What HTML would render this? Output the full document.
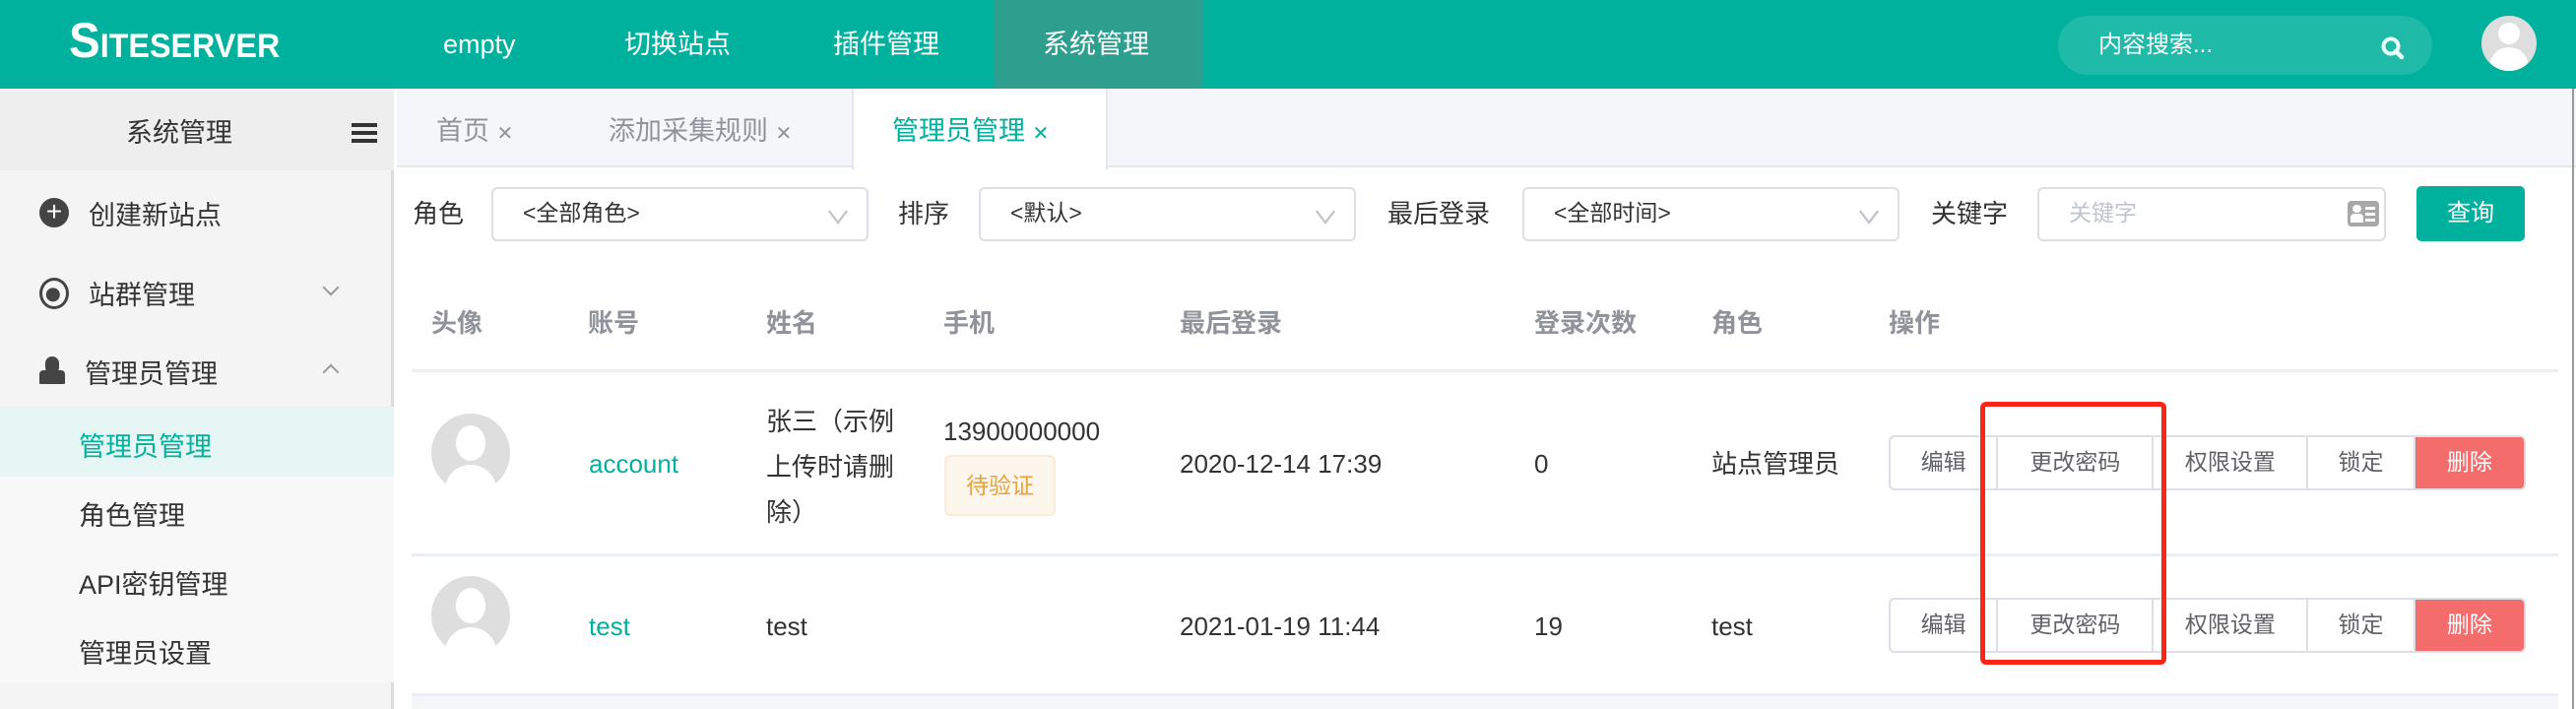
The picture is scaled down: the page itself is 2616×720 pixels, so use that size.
<!DOCTYPE html>
<html><head><meta charset="utf-8">
<style>
*{margin:0;padding:0;box-sizing:border-box}
body{width:2616px;height:720px;overflow:hidden;background:#fff;font-family:"Liberation Sans","Noto Sans CJK SC",sans-serif;color:#606266;position:relative;line-height:1.3}
.a{position:absolute;white-space:nowrap}
.hdr{left:0;top:0;width:2616px;height:90px;background:#00b19d}
.nav{color:#fff;font-size:27px;top:26px;line-height:38px}
.side{left:0;top:90px;width:400px;height:630px;background:#f4f4f4;border-right:3px solid #dcdcdc}
.sideh{left:0;top:90px;width:400px;height:83px;background:#eeeeee}
.mi{font-size:27px;color:#333}
.sub{font-size:27px;color:#333;left:80px}
.tabs{left:403px;top:90px;width:2213px;height:80px;background:#f5f6fa;border-bottom:2px solid #e4e7ed}
.tab{font-size:27px;color:#909399;top:116px}
.lbl{font-size:26px;color:#333;top:201px}
.sel{top:190px;height:55px;border:2px solid #dcdfe6;border-radius:6px;background:#fff;font-size:23px;color:#333;padding:0 30px;line-height:48px}
.chev{position:absolute;right:22px;top:16px;width:14px;height:14px;border-right:2px solid #c0c4cc;border-bottom:2px solid #c0c4cc;transform:scaleY(1.3) rotate(45deg)}
.th{font-size:26px;color:#909399;font-weight:bold;top:312px}
.td{font-size:26px;color:#333}
.line{height:3px;background:#ebeef5;left:418px;width:2180px}
.btns{left:1918px;width:647px;height:56px;border:2px solid #dcdfe6;border-radius:6px;background:#fff;overflow:hidden;display:flex}
.btns div{height:100%;font-size:23px;color:#606266;display:flex;align-items:center;justify-content:center;border-right:2px solid #dcdfe6}
.av{width:80px;height:80px;border-radius:50%;background:#dedede;overflow:hidden}
</style></head><body>
<div class="a hdr"></div>
<div class="a" style="left:70px;top:16px;color:#fff;font-weight:bold;font-size:34px;line-height:50px;transform:scaleX(0.95);transform-origin:left"><span style="font-size:50px">S</span>ITESERVER</div>
<div class="a" style="left:1010px;top:0;width:211px;height:90px;background:#2e9f8f"></div>
<div class="a nav" style="left:450px">empty</div>
<div class="a nav" style="left:634px">切换站点</div>
<div class="a nav" style="left:846px">插件管理</div>
<div class="a nav" style="left:1059px">系统管理</div>
<div class="a" style="left:2090px;top:16px;width:380px;height:60px;border-radius:30px;background:rgba(255,255,255,0.12)"></div>
<div class="a" style="left:2131px;top:30px;color:#fff;font-size:24px">内容搜索...</div>
<svg class="a" style="left:2416px;top:35px" width="28" height="28" viewBox="0 0 28 28"><circle cx="12" cy="12" r="7.5" fill="none" stroke="#e8fffb" stroke-width="4"/><path d="M17 17 L23 23" stroke="#e8fffb" stroke-width="4.5" stroke-linecap="round"/></svg>
<div class="a av" style="left:2520px;top:16px;width:56px;height:56px"><div class="a" style="left:17px;top:7px;width:22px;height:22px;border-radius:50%;background:#fff"></div><div class="a" style="left:9px;top:32px;width:38px;height:34px;border-radius:50%;background:#fff"></div></div>

<div class="a side"></div>
<div class="a sideh"></div>
<div class="a" style="left:128px;top:118px;font-size:27px;color:#333">系统管理</div>
<div class="a" style="left:357px;top:125px;width:26px;height:4px;background:#333;box-shadow:0 8px 0 #333,0 16px 0 #333"></div>
<div class="a" style="left:40px;top:201px;width:30px;height:30px;border-radius:50%;background:#444;color:#fff;font-size:28px;line-height:28px;text-align:center">+</div>
<div class="a mi" style="left:90px;top:202px">创建新站点</div>
<div class="a" style="left:40px;top:282px;width:30px;height:32px;border-radius:50%;border:3px solid #444;background:radial-gradient(circle at 45% 55%,#444 35%,transparent 37%)"></div>
<div class="a mi" style="left:90px;top:283px">站群管理</div>
<div class="a" style="left:330px;top:286px;width:12px;height:12px;border-right:2px solid #999;border-bottom:2px solid #999;transform:rotate(45deg)"></div>
<div class="a" style="left:46px;top:362px;width:14px;height:18px;border-radius:7px;background:#444"></div>
<div class="a" style="left:40px;top:376px;width:26px;height:14px;border-radius:4px 4px 1px 1px;background:#444"></div>
<div class="a mi" style="left:86px;top:363px">管理员管理</div>
<div class="a" style="left:330px;top:372px;width:12px;height:12px;border-left:2px solid #999;border-top:2px solid #999;transform:rotate(45deg)"></div>
<div class="a" style="left:0;top:413px;width:400px;height:280px;background:#f8f8f8"></div>
<div class="a" style="left:0;top:413px;width:400px;height:71px;background:#e6f6f4"></div>
<div class="a sub" style="top:437px;color:#00b19d">管理员管理</div>
<div class="a sub" style="top:507px">角色管理</div>
<div class="a sub" style="top:577px">API密钥管理</div>
<div class="a sub" style="top:647px">管理员设置</div>

<div class="a tabs"></div>
<div class="a tab" style="left:443px">首页 <span style="font-size:20px">✕</span></div>
<div class="a tab" style="left:618px">添加采集规则 <span style="font-size:20px">✕</span></div>
<div class="a" style="left:865px;top:90px;width:260px;height:82px;background:#fff;border-left:2px solid #e4e7ed;border-right:2px solid #e4e7ed"></div>
<div class="a tab" style="left:906px;color:#00b19d">管理员管理 <span style="font-size:20px">✕</span></div>

<div class="a lbl" style="left:419px">角色</div>
<div class="a sel" style="left:499px;width:383px">&lt;全部角色&gt;<span class="chev"></span></div>
<div class="a lbl" style="left:912px">排序</div>
<div class="a sel" style="left:994px;width:383px">&lt;默认&gt;<span class="chev"></span></div>
<div class="a lbl" style="left:1409px">最后登录</div>
<div class="a sel" style="left:1546px;width:383px">&lt;全部时间&gt;<span class="chev"></span></div>
<div class="a lbl" style="left:1961px">关键字</div>
<div class="a sel" style="left:2069px;width:354px;color:#c0c4cc">关键字</div>
<div class="a" style="left:2384px;top:204px;width:32px;height:26px;border-radius:4px;background:#a8a8a8"><div class="a" style="left:5px;top:4px;width:9px;height:8px;border-radius:50%;background:#fff"></div><div class="a" style="left:3px;top:13px;width:13px;height:9px;background:#fff;border-radius:4px 4px 0 0"></div><div class="a" style="left:18px;top:6px;width:10px;height:3px;background:#fff;box-shadow:0 6px 0 #fff,0 12px 0 #fff"></div></div>
<div class="a" style="left:2454px;top:189px;width:110px;height:56px;border-radius:5px;background:#00b19d;color:#fff;font-size:24px;text-align:center;line-height:56px">查询</div>
<div class="a" style="left:2612px;top:90px;width:2px;height:630px;background:#999"></div>

<div class="a th" style="left:438px">头像</div>
<div class="a th" style="left:597px">账号</div>
<div class="a th" style="left:778px">姓名</div>
<div class="a th" style="left:958px">手机</div>
<div class="a th" style="left:1198px">最后登录</div>
<div class="a th" style="left:1558px">登录次数</div>
<div class="a th" style="left:1738px">角色</div>
<div class="a th" style="left:1918px">操作</div>
<div class="a line" style="top:375px"></div>
<div class="a line" style="top:562px"></div>
<div class="a" style="left:418px;top:704px;width:2180px;height:16px;background:#f5f6fa;border-top:3px solid #ebeef5"></div>

<div class="a av" style="left:438px;top:420px"><div class="a" style="left:25px;top:12px;width:30px;height:36px;border-radius:50%;background:#fff"></div><div class="a" style="left:14px;top:52px;width:52px;height:50px;border-radius:50%;background:#fff"></div></div>
<div class="a td" style="left:598px;top:455px;color:#00b19d">account</div>
<div class="a td" style="left:778px;top:405px;line-height:46px;white-space:normal;width:140px">张三（示例上传时请删除）</div>
<div class="a td" style="left:958px;top:422px">13900000000</div>
<div class="a" style="left:959px;top:462px;width:113px;height:62px;background:#fdf6ec;border:2px solid #faecd8;border-radius:6px;color:#e6a23c;font-size:23px;text-align:center;line-height:58px">待验证</div>
<div class="a td" style="left:1198px;top:455px">2020-12-14 17:39</div>
<div class="a td" style="left:1558px;top:455px">0</div>
<div class="a td" style="left:1738px;top:455px">站点管理员</div>
<div class="a btns" style="top:442px"><div style="width:110px">编辑</div><div style="width:159px">更改密码</div><div style="width:158px">权限设置</div><div style="width:109px">锁定</div><div style="width:111px;background:#f56c6c;color:#fff;border:none">删除</div></div>

<div class="a av" style="left:438px;top:585px"><div class="a" style="left:25px;top:12px;width:30px;height:36px;border-radius:50%;background:#fff"></div><div class="a" style="left:14px;top:52px;width:52px;height:50px;border-radius:50%;background:#fff"></div></div>
<div class="a td" style="left:598px;top:620px;color:#00b19d">test</div>
<div class="a td" style="left:778px;top:620px">test</div>
<div class="a td" style="left:1198px;top:620px">2021-01-19 11:44</div>
<div class="a td" style="left:1558px;top:620px">19</div>
<div class="a td" style="left:1738px;top:620px">test</div>
<div class="a btns" style="top:607px"><div style="width:110px">编辑</div><div style="width:159px">更改密码</div><div style="width:158px">权限设置</div><div style="width:109px">锁定</div><div style="width:111px;background:#f56c6c;color:#fff;border:none">删除</div></div>

<div class="a" style="left:2011px;top:408px;width:189px;height:267px;border:5px solid #ff2418;border-radius:6px"></div>
</body></html>
